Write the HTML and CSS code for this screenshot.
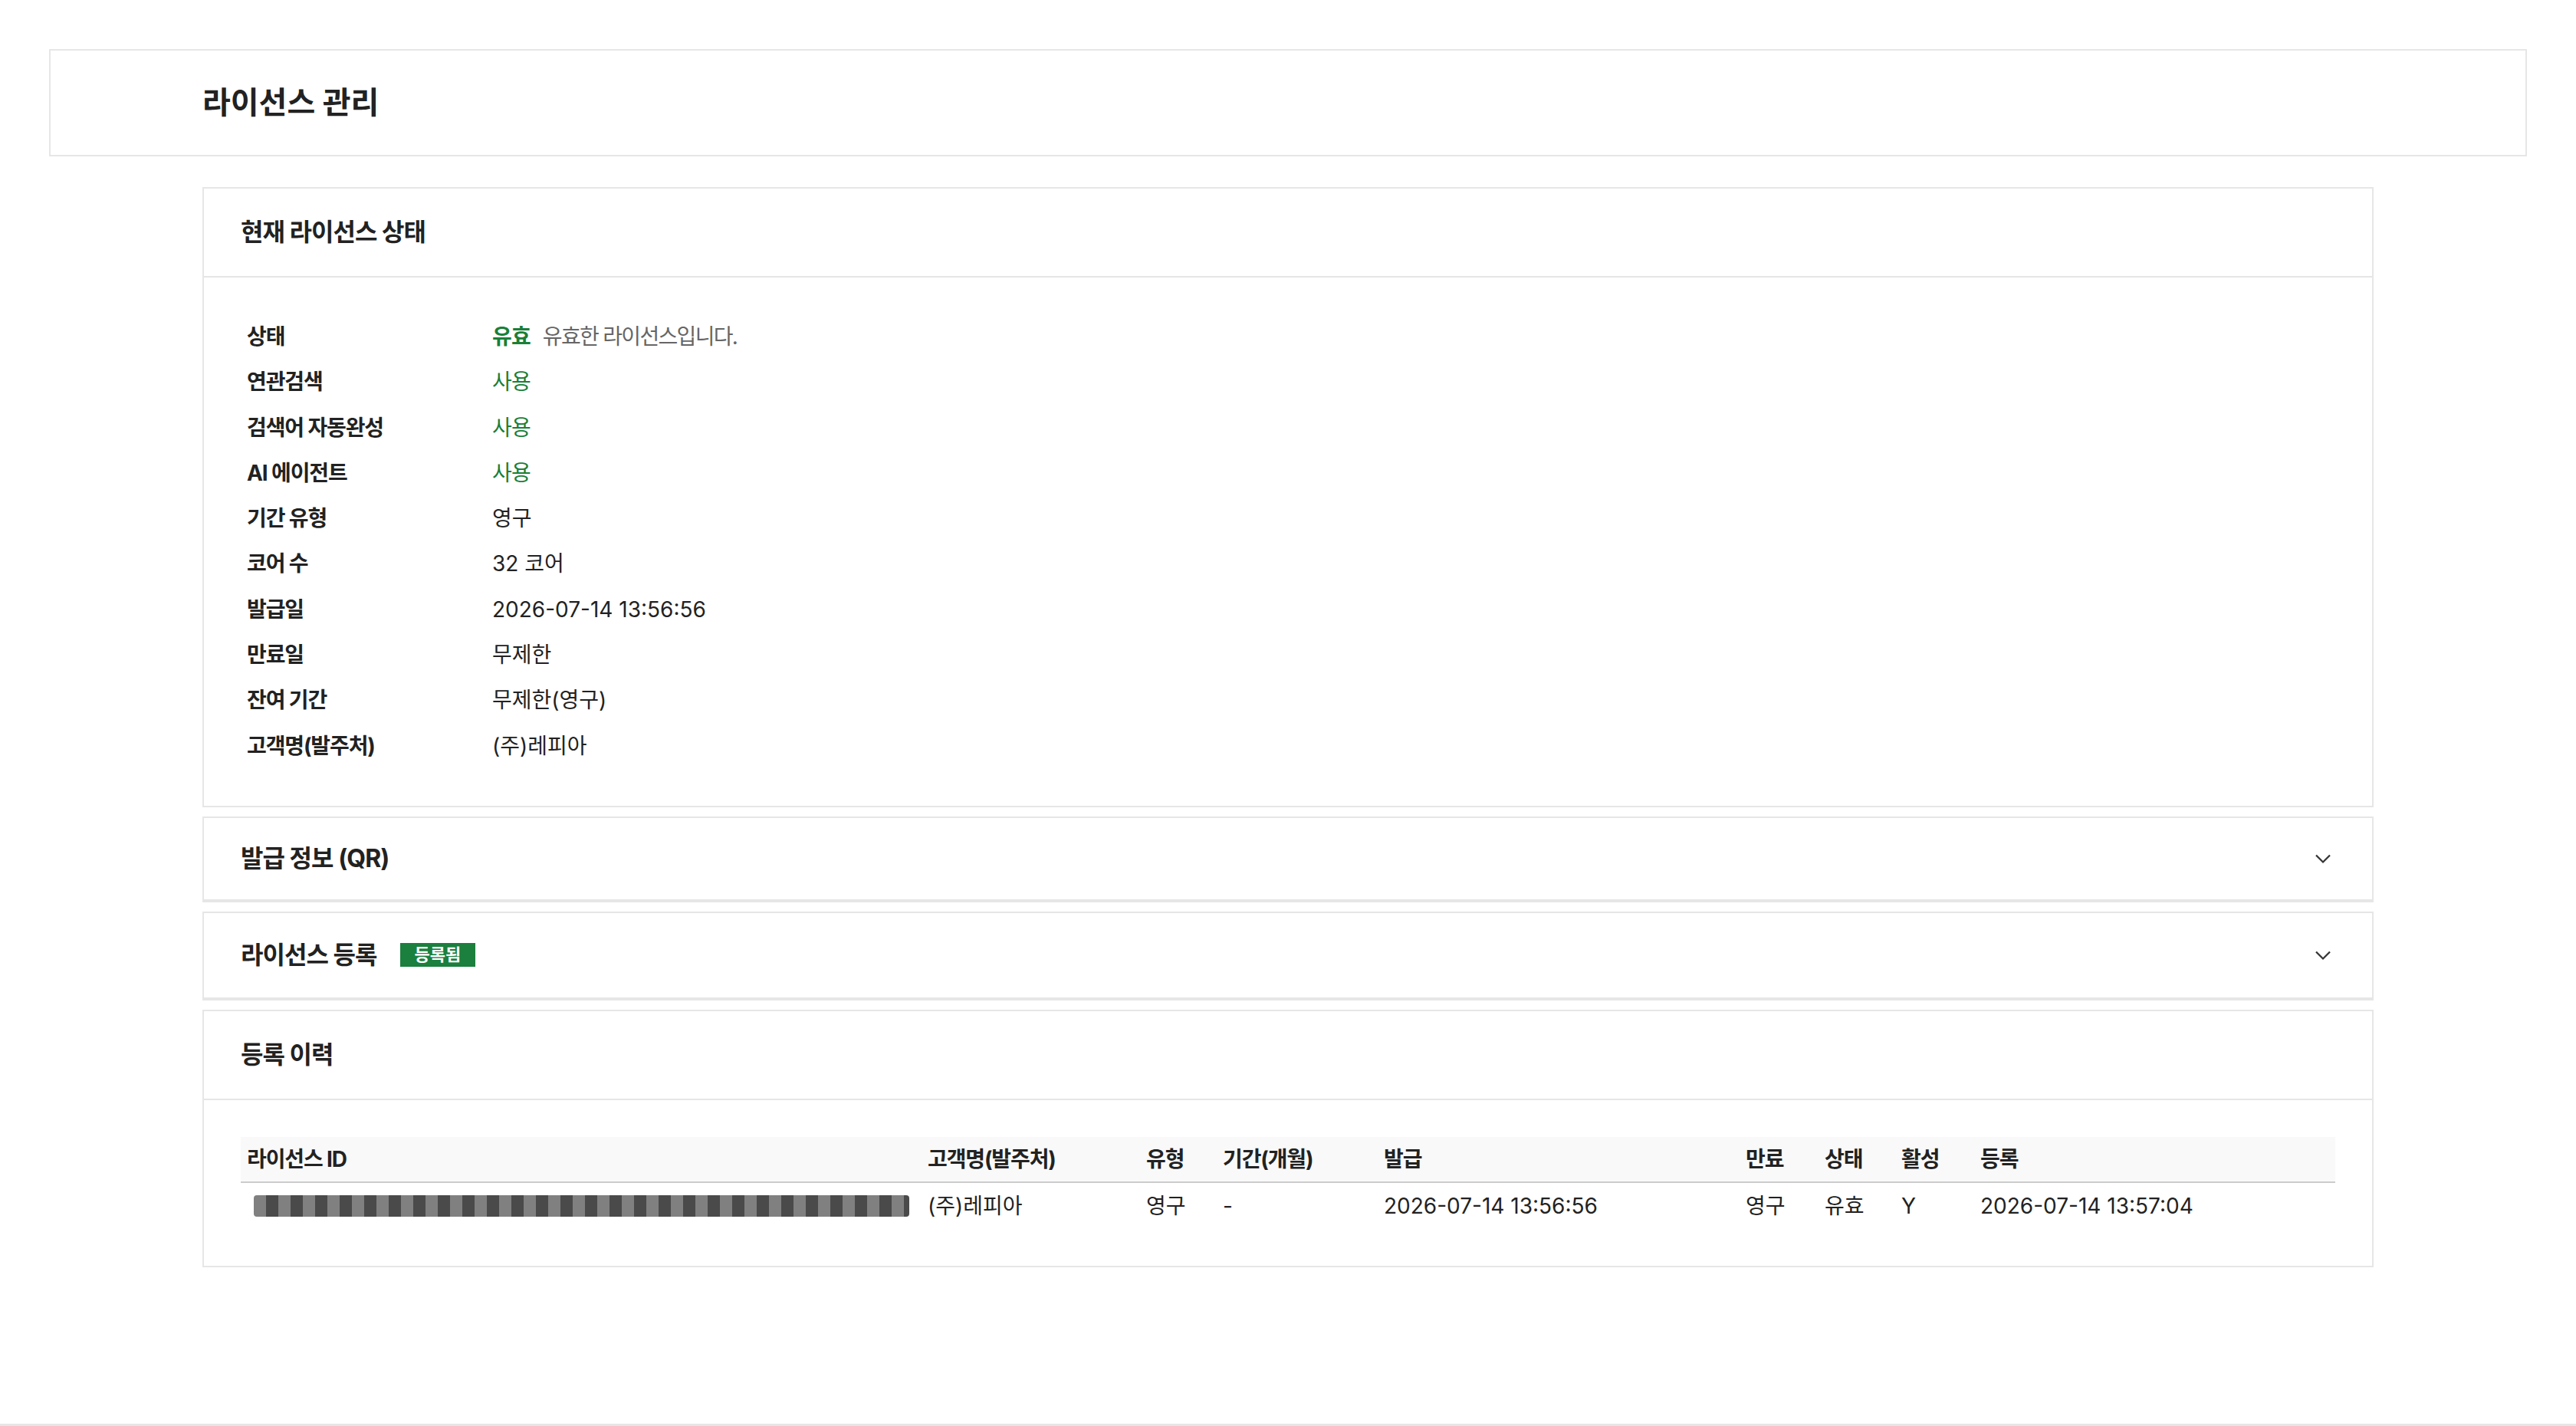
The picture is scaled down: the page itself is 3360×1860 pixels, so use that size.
FILE: index.html
```html
<!DOCTYPE html>
<html lang="ko">
<head>
  <meta charset="UTF-8" />
  <meta name="viewport" content="width=device-width, initial-scale=1.0"/>
  <title>라이선스 관리</title>
  <link rel="stylesheet" href="styles.css">
</head>
<body>
  <div class="page">
    <header class="page-header">
      <div class="inner">
        <h1>라이선스 관리</h1>
      </div>
    </header>

    <main class="inner">
      <!-- 현재 상태 -->
      <section class="card">
        <div class="card-head">
          <h2>현재 라이선스 상태</h2>
        </div>
        <div class="card-body">
          <table class="info">
            <tr><th>상태</th><td><span class="ok strong">유효</span><span class="note">유효한 라이선스입니다.</span></td></tr>
            <tr><th>연관검색</th><td><span class="ok">사용</span></td></tr>
            <tr><th>검색어 자동완성</th><td><span class="ok">사용</span></td></tr>
            <tr><th>AI 에이전트</th><td><span class="ok">사용</span></td></tr>
            <tr><th>기간 유형</th><td>영구</td></tr>
            <tr><th>코어 수</th><td>32 코어</td></tr>
            <tr><th>발급일</th><td>2026-07-14 13:56:56</td></tr>
            <tr><th>만료일</th><td>무제한</td></tr>
            <tr><th>잔여 기간</th><td>무제한(영구)</td></tr>
            <tr><th>고객명(발주처)</th><td>(주)레피아</td></tr>
          </table>
        </div>
      </section>

      <!-- 접힌 섹션들 -->
      <details class="card fold">
        <summary>
          <h2>발급 정보 (QR)</h2>
          <svg class="chev" viewBox="0 0 24 24" width="36" height="36"><path d="M6 9l6 6 6-6" fill="none" stroke="#333" stroke-width="1.5"/></svg>
        </summary>
      </details>

      <details class="card fold tall">
        <summary>
          <h2>라이선스 등록 <span class="badge">등록됨</span></h2>
          <svg class="chev" viewBox="0 0 24 24" width="36" height="36"><path d="M6 9l6 6 6-6" fill="none" stroke="#333" stroke-width="1.5"/></svg>
        </summary>
      </details>

      <!-- 등록 이력 -->
      <section class="card">
        <div class="card-head">
          <h2>등록 이력</h2>
        </div>
        <div class="card-body">
          <table class="history">
            <thead>
              <tr>
                <th class="c-id">라이선스 ID</th>
                <th class="c-cust">고객명(발주처)</th>
                <th class="c-type">유형</th>
                <th class="c-term">기간(개월)</th>
                <th class="c-issue">발급</th>
                <th class="c-exp">만료</th>
                <th class="c-state">상태</th>
                <th class="c-act">활성</th>
                <th>등록</th>
              </tr>
            </thead>
            <tbody>
              <tr>
                <td><span class="masked"></span></td>
                <td>(주)레피아</td>
                <td>영구</td>
                <td>-</td>
                <td>2026-07-14 13:56:56</td>
                <td>영구</td>
                <td>유효</td>
                <td>Y</td>
                <td>2026-07-14 13:57:04</td>
              </tr>
            </tbody>
          </table>
        </div>
      </section>
    </main>
  </div>
  <footer class="page-footer"></footer>
</body>
</html>
```

FILE: styles.css
```css
body {
  font-family: Inter, "Noto Sans CJK KR", sans-serif;
  margin: 0;
  background: #fff;
  color: #222;
}

.page {
  min-height: calc(100vh - 3px);
  padding-top: 64px;
  box-sizing: border-box;
}

.inner {
  width: 2832px;
  margin: 0 auto;
}

.page-header {
  margin: 0 64px 40px;
  padding: 44px 0;
  border: 2px solid #e6e6e6;
  background: #fff;
}

h1 {
  margin: 0;
  font-size: 40px;
  line-height: 48px;
  font-weight: 700;
  color: #222;
}

.card {
  border: 2px solid #e6e6e6;
  background: #fff;
  margin-bottom: 12px;
}

.card-head {
  padding: 37px 48px;
  border-bottom: 2px solid #e6e6e6;
}

h2 {
  margin: 0;
  font-size: 32px;
  line-height: 40px;
  font-weight: 700;
  color: #222;
  letter-spacing: -0.03em;
}

.card-body {
  padding: 48px;
}

/* 상태 표 */
.info {
  border-collapse: collapse;
  font-size: 28px;
  line-height: 35.3px;
}

.info th,
.info td {
  padding: 12px 8px;
  text-align: left;
  vertical-align: middle;
}

.info th {
  width: 304px;
  font-weight: 700;
  color: #222;
  letter-spacing: -0.04em;
}

.info td {
  color: #222;
}

.ok {
  color: #1a7f37;
  letter-spacing: -0.03em;
}

.strong {
  font-weight: 700;
}

.note {
  margin-left: 16px;
  color: #666;
  letter-spacing: -0.06em;
}

/* 접힘 섹션 */
.fold {
  border-bottom-width: 4px;
}

.fold summary {
  list-style: none;
  display: flex;
  align-items: center;
  justify-content: space-between;
  padding: 33px 46px 33px 48px;
  cursor: pointer;
}

.fold.tall summary {
  padding-top: 35px;
  padding-bottom: 35px;
}

.fold summary::-webkit-details-marker {
  display: none;
}

.fold h2 {
  display: flex;
  align-items: center;
}

.badge {
  display: inline-block;
  margin-left: 30px;
  padding: 0 19px;
  height: 31px;
  line-height: 31px;
  background: #1b7f3d;
  color: #fff;
  font-size: 22px;
  font-weight: 700;
  letter-spacing: 0;
}

.chev {
  display: block;
}

/* 이력 표 */
.history {
  width: 100%;
  border-collapse: collapse;
  font-size: 28px;
  line-height: 34px;
  table-layout: fixed;
}

.history th,
.history td {
  box-sizing: border-box;
  padding: 12px 8px;
  text-align: left;
  white-space: nowrap;
}

.history td {
  padding-top: 13px;
  padding-bottom: 13px;
}

.history thead th {
  background: #f9f9f9;
  border-bottom: 2px solid #ccc;
  font-weight: 700;
  letter-spacing: -0.04em;
}

.c-id { width: 888px; }
.c-cust { width: 285px; }
.c-type { width: 100px; }
.c-term { width: 210px; }
.c-issue { width: 472px; }
.c-exp { width: 103px; }
.c-state { width: 100px; }
.c-act { width: 103px; }

.masked {
  display: block;
  width: 855px;
  height: 28px;
  margin-left: 9px;
  border-radius: 4px;
  background: repeating-linear-gradient(90deg, #808080 0 16px, #4a4a4a 16px 32px);
}

.page-footer {
  border-top: 3px solid #e6e6e6;
  height: 60px;
}
```
